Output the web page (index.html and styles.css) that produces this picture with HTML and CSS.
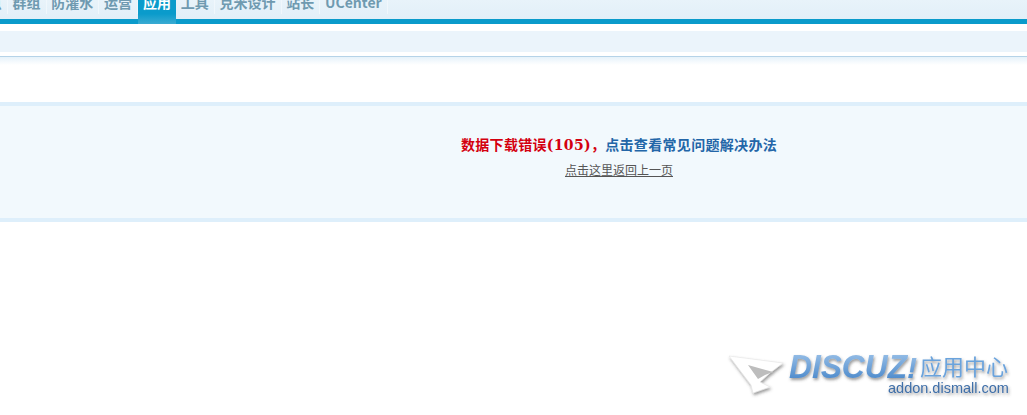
FILE: index.html
```html
<!DOCTYPE html>
<html lang="zh-CN">
<head>
<meta charset="utf-8">
<title>应用中心</title>
<link rel="stylesheet" href="styles.css">
</head>
<body>
<nav class="topnav">
  <a class="tab first">站点</a>
  <a class="tab">群组</a>
  <a class="tab">防灌水</a>
  <a class="tab">运营</a>
  <a class="tab active">应用</a>
  <a class="tab">工具</a>
  <a class="tab">克米设计</a>
  <a class="tab">站长</a>
  <a class="tab">UCenter</a>
</nav>
<div class="subbar"></div>
<div class="rule"></div>
<main class="infobox">
  <h4 class="message"><span class="err">数据下载错误(105)，</span><a class="help">点击查看常见问题解决办法</a></h4>
  <a class="back">点击这里返回上一页</a>
</main>
<svg class="watermark" width="307" height="60" viewBox="0 0 307 60" aria-label="Discuz! 应用中心">
  <defs>
    <linearGradient id="blue" x1="0" y1="0" x2="0" y2="1">
      <stop offset="0" stop-color="#a4c8ec"/>
      <stop offset="1" stop-color="#3f80c6"/>
    </linearGradient>
    <filter id="soft" x="-20%" y="-20%" width="140%" height="160%">
      <feDropShadow dx="1" dy="2" stdDeviation="1.7" flood-color="#444" flood-opacity=".55"/>
    </filter>
  </defs>
  <g filter="url(#soft)">
    <path d="M9 11 L63 18 L50 28 L40 37 L50 42 L33 48 L31 40 Z" fill="#fff" stroke="#e4e4e4" stroke-width=".6"/>
    <path d="M28 20 L53 27 L45 30 L38 34 Z" fill="#bdbdbd"/>
  </g>
  <g filter="url(#soft)">
    <text class="brand" x="69" y="33" fill="url(#blue)" textLength="118" lengthAdjust="spacingAndGlyphs">DISCUZ</text>
    <text class="bang" x="187" y="33" fill="url(#blue)">!</text>
  </g>
  <g filter="url(#soft)">
    <text class="cn" x="200" y="30">应用中心</text>
    <text class="url" x="168" y="48">addon.dismall.com</text>
  </g>
</svg>
</body>
</html>
```

FILE: styles.css
```css
html, body {
  margin: 0;
  padding: 0;
  height: 415px;
  overflow: hidden;
  background: #fff;
}
body {
  position: relative;
  font-family: "Liberation Serif", "Noto Sans CJK SC", serif;
}
.topnav {
  display: flex;
  align-items: flex-start;
  height: 24px;
  overflow: hidden;
  background: linear-gradient(#e8f3fa, #e2eff8 19px, #0a9bcb 19px);
}
.tab {
  flex: none;
  box-sizing: border-box;
  height: 19px;
  padding: 0 5px 0 4.75px;
  margin-top: -5px;
  border-right: 1px solid #f0f7fc;
  font: bold 14px/14px "Noto Sans CJK SC", sans-serif;
  color: #6f9ab0;
  white-space: nowrap;
}
.first {
  margin-left: -31px;
}
.active {
  height: 29px;
  padding: 0 5px;
  border-right: 0;
  color: #fff;
  background: linear-gradient(#0a9bcb 65%, #3aabd2);
}
.subbar {
  height: 21px;
  margin-top: 7px;
  background: #ebf4fb;
}
.rule {
  height: 8px;
  margin-top: 4px;
  border-top: 1px solid #b5d3e8;
  background: linear-gradient(#e6f2fa, #fff);
}
.infobox {
  box-sizing: border-box;
  height: 120px;
  margin-top: 37px;
  padding: 30px 0 0 211px;
  border-top: 4px solid #deeffb;
  border-bottom: 4px solid #deeffb;
  background: #f2f9fd;
  text-align: center;
}
.message {
  margin: 0;
  font: bold 14px/18px "DejaVu Serif", "Noto Sans CJK SC", serif;
  letter-spacing: .32px;
}
.err {
  color: #d4000f;
}
.help {
  color: #2366a8;
}
.back {
  display: block;
  margin-top: 8px;
  font: 12px/16px "Noto Sans CJK SC", sans-serif;
  color: #555;
  text-decoration: underline;
}
.watermark {
  position: absolute;
  left: 720px;
  top: 345px;
}
.brand {
  font: italic bold 33px "Liberation Sans", sans-serif;
}
.bang {
  font: italic bold 30px "Liberation Sans", sans-serif;
}
.cn {
  font: 22px "Noto Sans CJK SC", sans-serif;
  fill: #6ba3dc;
}
.url {
  font: 14.5px "Liberation Sans", sans-serif;
  fill: #3f6fa8;
}
```
